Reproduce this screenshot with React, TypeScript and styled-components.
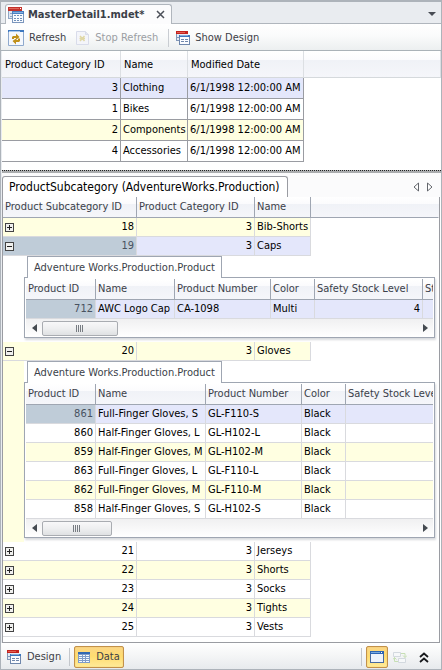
import React, { useState } from "react";
import styled, { createGlobalStyle, css } from "styled-components";

const GlobalStyle = createGlobalStyle`
  *, *::before, *::after { box-sizing: border-box; }
  body { margin: 0; }
  body, button {
    font-family: "DejaVu Sans Condensed", "Noto Sans", sans-serif;
    font-size: 11px;
    line-height: 14px;
  }
  button { padding: 0; border: 0; background: none; color: inherit; }
  svg { display: block; flex: none; }
`;

const line = "#9a9ca2";
const softLine = "#d9dade";
const steel = "#9fa6b2";
const yellow = "#ffffe1";
const lavender = "#e4e7fb";
const focused = "#bfccd8";

/* ---------- layout ---------- */

const Window = styled.main`
  display: flex;
  flex-direction: column;
  min-height: 100vh;
  border: 1px solid #adb3ba;
  border-top-width: 2px;
  background: #e9ecf0;
  color: #000;
`;

const DocumentStrip = styled.header`
  display: flex;
  align-items: flex-end;
  justify-content: space-between;
  height: 22px;
  padding: 0 1px 0 4px;
  border-bottom: 1px solid #b0b6bd;
`;

const DocumentTab = styled.div`
  display: flex;
  align-items: center;
  gap: 8px;
  height: 20px;
  margin-bottom: -1px;
  padding: 0 2px;
  border: 1px solid #b0b6bd;
  border-bottom: 0;
  border-radius: 3px 3px 0 0;
  background: #fcfcfd;
`;

const DocumentTitle = styled.button`
  display: flex;
  align-items: center;
  gap: 4px;
  font-weight: bold;
  color: #3b3f48;
`;

const IconButton = styled.button<{ $narrow?: boolean }>`
  display: flex;
  align-items: center;
  justify-content: center;
  width: ${(p) => (p.$narrow ? 14 : 16)}px;
  height: 18px;
`;

const Toolbar = styled.div`
  display: flex;
  align-items: center;
  height: 27px;
  padding: 1px 7px 0;
  border-bottom: 1px solid #aab2b8;
  background: linear-gradient(#ffffff, #fafbfb 45%, #eceff0);
`;

const ToolButton = styled.button`
  display: flex;
  align-items: center;
  gap: 5px;
  margin-right: 10px;
  color: #3d4047;
  &:disabled { color: #9b9ea3; }
`;

const Divider = styled.span`
  width: 1px;
  height: 18px;
  margin-right: 7px;
  background: #c9cdd2;
`;

const Content = styled.div`
  display: flex;
  flex: 1;
  flex-direction: column;
  margin-left: 1px;
  background: #fff;
`;

const Splitter = styled.div`
  height: 3px;
  margin-top: 8px;
  border-bottom: 2px solid #aaacae;
  background: repeating-linear-gradient(90deg, #222 0 1px, #b8babc 1px 2px) 0 0 / 100% 1px no-repeat;
`;

const DetailStrip = styled.div`
  display: flex;
  align-items: flex-end;
  justify-content: space-between;
  height: 24px;
  padding-right: 4px;
  background: #fbfbfc;
`;

const DetailTab = styled.button`
  height: 21px;
  padding: 0 7px 0 6px;
  border: 1px solid ${line};
  border-bottom: 0;
  border-radius: 3px 3px 0 0;
  background: #fff;
  font-size: 12px;
`;

const Pager = styled.div`
  display: flex;
  padding-bottom: 1px;
`;

const DetailPanel = styled.section`
  flex: 1;
  margin-right: 1px;
  padding-bottom: 5px;
  border: 1px solid ${line};
  border-top: 0;
`;

/* ---------- grids ---------- */

const Grid = styled.table`
  width: 100%;
  border-collapse: separate;
  border-spacing: 0;
  table-layout: fixed;
`;

const headerFill = "linear-gradient(#ffffff 0, #fbfbfd 35%, #f0f2f7 36%, #f5f6fa 100%)";

const HeadCell = styled.th<{ $variant?: "master" | "detail" }>`
  height: ${(p) => (p.$variant === "master" ? 27 : 21)}px;
  padding: ${(p) => (p.$variant === "master" ? "2px 0 0 3px" : "0 0 0 2px")};
  overflow: hidden;
  border-right: 1px solid ${(p) => (p.$variant === "master" ? "#dcdfe3" : steel)};
  border-bottom: 1px solid ${(p) => (p.$variant === "master" ? "#d5d9dc" : steel)};
  background: ${headerFill};
  color: ${(p) => (p.$variant === "master" ? "#000" : "#3b3f4a")};
  font-weight: normal;
  text-align: left;
  white-space: nowrap;
  &:last-child { border-right-color: ${(p) => (p.$variant === "master" ? "#dcdfe3" : "transparent")}; }
`;

type Tone = "plain" | "alt" | "selected";
const fill: Record<Tone, string> = { plain: "#fff", alt: yellow, selected: lavender };

const Cell = styled.td<{ $tone?: Tone; $master?: boolean; $numeric?: boolean; $focus?: boolean }>`
  height: ${(p) => (p.$master ? 21 : 19)}px;
  padding: 0 2px;
  overflow: hidden;
  border-right: 1px solid ${(p) => (p.$master ? line : softLine)};
  border-bottom: 1px solid ${(p) => (p.$master ? line : softLine)};
  background: ${(p) => (p.$focus ? focused : fill[p.$tone ?? "plain"])};
  text-align: ${(p) => (p.$numeric ? "right" : "left")};
  white-space: nowrap;
  ${(p) => p.$focus && css`color: #48525f;`}
`;

const Blank = styled.td`
  padding: 0;
`;

const ExpandLine = styled.div`
  display: flex;
  align-items: center;
  justify-content: space-between;
`;

const Expander = styled.button`
  display: flex;
  width: 9px;
  height: 9px;
`;

const NestedCell = styled.td<{ $tone: Tone }>`
  padding: 0 4px 4px 0;
  background: linear-gradient(90deg, ${(p) => fill[p.$tone]} 21px, #fff 21px);
`;

const NestedArea = styled.div`
  display: flex;
  flex-direction: column;
  align-items: flex-start;
  margin-left: 21px;
  background: #fff;
`;

const NestedTab = styled.button`
  position: relative;
  height: 22px;
  margin: 0 0 -1px 3px;
  padding: 0 6px;
  border: 1px solid ${steel};
  border-bottom: 0;
  background: #fff;
  color: #3b3f4a;
`;

const NestedBox = styled.div`
  width: 100%;
  padding: 1px 1px 0;
  border: 1px solid ${steel};
  box-shadow: 1px 2px 2px #d8dadd;
`;

const GridClip = styled.div`
  overflow: hidden;
`;

const ScrollTrack = styled.div`
  display: flex;
  align-items: center;
  height: 18px;
  background: linear-gradient(#f0f0f1, #fff);
`;

const ScrollThumb = styled.div<{ $size: number }>`
  display: flex;
  align-items: center;
  justify-content: center;
  width: ${(p) => p.$size}px;
  height: 15px;
  margin-right: auto;
  border: 1px solid #a9acb1;
  border-radius: 2px;
  background: linear-gradient(#f8f8f9, #eeeff0 50%, #dfe1e3);
`;

/* ---------- footer ---------- */

const Footer = styled.footer`
  display: flex;
  align-items: center;
  height: 26px;
  padding: 2px 5px 0 2px;
  background: linear-gradient(#ffffff, #f4f5f6 50%, #e7eaed);
`;

const ViewButton = styled.button<{ $active?: boolean }>`
  display: flex;
  align-items: center;
  justify-content: center;
  gap: 6px;
  min-width: ${(p) => (p.$active ? 22 : 24)}px;
  height: 22px;
  padding: 0 3px;
  border: 1px solid transparent;
  border-radius: 2px;
  color: #3d4047;
  ${(p) => p.$active && css`
    border-color: #c2914a;
    background: linear-gradient(#fbd687, #ffdc70 45%, #ffeb99);
    box-shadow: inset 0 0 1px #d8a850;
  `}
`;

const FooterDivider = styled.span`
  width: 1px;
  height: 18px;
  margin: 0 4px;
  background: #c3c7cc;
`;

const Spacer = styled.span`
  flex: 1;
`;

/* ---------- icons ---------- */

const FormIcon = () => (
  <svg width="16" height="16" viewBox="0 0 16 16" shapeRendering="crispEdges" aria-hidden="true">
    <path fill="#dfe7f2" d="M0 4h13v8H0z" />
    <path fill="#c3312b" d="M0 0h14v4H0z" />
    <path fill="#e0685c" d="M1 1h10v1H1z" />
    <path fill="#fff" d="M12 1h1v1h-1z" />
    <path fill="#8fa5c4" d="M0 4h1v8H0zM0 11h4v1H0zM2 6h2v1H2zM2 9h2v1H2z" />
    <path fill="#f9fbff" d="M4 5h12v11H4z" />
    <path fill="#4a7fc1" d="M4 4h12v3H4z" />
    <path fill="#86b1e2" d="M5 5h10v1H5z" />
    <path fill="#7c97bd" d="M4 7h1v9H4zM15 7h1v9h-1zM4 15h12v1H4z" />
    <path fill="#6f8fb9" d="M6 8h2v1H6zM9 8h2v1H9zM12 8h2v1h-2zM6 11h2v1H6zM9 11h2v1H9zM12 11h2v1h-2zM6 13h2v1H6zM9 13h2v1H9zM12 13h2v1h-2z" />
  </svg>
);

const DesignIcon = () => (
  <svg width="14" height="14" viewBox="0 0 14 14" shapeRendering="crispEdges" aria-hidden="true">
    <path fill="#e4eaf4" d="M0 3h12v7H0z" />
    <path fill="#c3221d" d="M0 0h12v3H0z" />
    <path fill="#e25e52" d="M1 1h8v1H1z" />
    <path fill="#8297b8" d="M0 3h1v7H0zM0 9h3v1H0zM1 6h2v1H1z" />
    <path fill="#fbfcff" d="M3 5h11v9H3z" />
    <path fill="#3c76bd" d="M3 4h11v2H3z" />
    <path fill="#86aedb" d="M4 4h8v1H4z" />
    <path fill="#6f87ac" d="M3 6h1v8H3zM13 6h1v8h-1zM3 13h11v1H3zM5 8h3v1H5zM9 8h3v1H9zM5 10h3v1H5zM9 10h3v1H9z" />
  </svg>
);

const RefreshIcon = () => (
  <svg width="16" height="16" viewBox="0 0 16 16" aria-hidden="true">
    <path fill="#f5f8fd" stroke="#8fa9cd" d="M.5 1.5h15v14H.5z" />
    <path fill="#3d78c0" d="M0 0h16v2H0z" />
    <path fill="#a9c8ec" d="M1 1h11v1H1z" />
    <path fill="#c0901a" d="M4 9V7l1-1h3V3.500L11.500 7 8 10V8H6v1zM12 8.500V11l-1 1H8v2.500L4.500 11 8 8.500V10h2V8.500z" />
  </svg>
);

const StopIcon = () => (
  <svg width="14" height="16" viewBox="0 0 14 16" aria-hidden="true">
    <path fill="#f4f5fa" stroke="#d9dcea" d="M.5 1.500h9l3 3v10H.5z" />
    <path fill="#e4e7f2" stroke="#d9dcea" d="M9.500 1.500v3h3" />
    <path fill="none" stroke="#e0d8a6" strokeWidth="1.500" d="M4 6l4.500 5M8.500 6L4 11M3.500 8.500H9" />
  </svg>
);

const CloseIcon = () => (
  <svg width="9" height="9" viewBox="0 0 9 9" aria-hidden="true">
    <path stroke="#4c5059" strokeWidth="1.500" d="M1 1l7 7M8 1L1 8" />
  </svg>
);

const MenuArrow = () => (
  <svg width="8" height="4" viewBox="0 0 8 4" aria-hidden="true">
    <path fill="#484c54" d="M0 0h8L4 4z" />
  </svg>
);

const OutlineArrow = ({ dir }: { dir: "left" | "right" }) => (
  <svg width="6" height="10" viewBox="0 0 6 10" aria-hidden="true">
    <path fill="#fff" stroke="#63666c" d={dir === "left" ? "M5.500 1v8L1 5z" : "M.5 1v8L5 5z"} />
  </svg>
);

const ScrollArrow = ({ dir }: { dir: "left" | "right" }) => (
  <svg width="5" height="8" viewBox="0 0 5 8" aria-hidden="true">
    <path fill="#444a50" d={dir === "left" ? "M5 0v8L0 4z" : "M0 0v8l5-4z"} />
  </svg>
);

const Grip = () => (
  <svg width="8" height="7" viewBox="0 0 8 7" shapeRendering="crispEdges" aria-hidden="true">
    <path fill="#777c82" d="M0 0h1v7H0zM2 0h1v7H2zM4 0h1v7H4zM6 0h1v7H6z" />
  </svg>
);

const SignIcon = ({ open }: { open: boolean }) => (
  <svg width="9" height="9" viewBox="0 0 9 9" shapeRendering="crispEdges" aria-hidden="true">
    <path fill="#444" d="M0 0h9v9H0z" />
    <path fill="#f0f0ee" d="M1 1h7v7H1z" />
    <path fill="#222" d={open ? "M2 4h5v1H2z" : "M2 4h5v1H2zM4 2h1v5H4z"} />
  </svg>
);

const TableIcon = () => (
  <svg width="12" height="11" viewBox="0 0 12 11" shapeRendering="crispEdges" aria-hidden="true">
    <path fill="#7f9cc8" d="M0 0h12v11H0z" />
    <path fill="#3168b3" d="M0 0h12v2H0z" />
    <path fill="#f6faff" d="M1 3h3v1H1zM5 3h2v1H5zM8 3h3v1H8zM1 5h3v1H1zM5 5h2v1H5zM8 5h3v1H8zM1 7h3v1H1zM5 7h2v1H5zM8 7h3v1H8zM1 9h3v1H1zM5 9h2v1H5zM8 9h3v1H8z" />
  </svg>
);

const PaneIcon = () => (
  <svg width="14" height="12" viewBox="0 0 14 12" shapeRendering="crispEdges" aria-hidden="true">
    <path fill="#47699f" d="M0 0h14v12H0z" />
    <path fill="#2c65b5" d="M0 0h14v3H0z" />
    <path fill="#79a9df" d="M1 1h9v1H1z" />
    <path fill="#fff" d="M11 1h1v1h-1z" />
    <path fill="#edf3fc" d="M1 3h12v8H1z" />
  </svg>
);

const LinkIcon = () => (
  <svg width="14" height="13" viewBox="0 0 14 13" aria-hidden="true">
    <path fill="#f6f8f9" stroke="#d3d9df" d="M.5 1.500h7v4h-7zM5.500 7.500h7v4h-7z" />
    <path fill="none" stroke="#c6dfb4" d="M8 2.500h4v4M10 4.500l2 2 2-2M5 10.500H1.500v-4M0 8.500l1.500-2 2 2" />
  </svg>
);

const ChevronsUp = () => (
  <svg width="10" height="11" viewBox="0 0 10 11" aria-hidden="true">
    <path fill="none" stroke="#18191c" strokeWidth="1.800" d="M1 5l4-3.500L9 5M1 10l4-3.500L9 10" />
  </svg>
);

/* ---------- data ---------- */

const categories: { id: number; name: string; tone: Tone }[] = [
  { id: 3, name: "Clothing", tone: "selected" },
  { id: 1, name: "Bikes", tone: "plain" },
  { id: 2, name: "Components", tone: "alt" },
  { id: 4, name: "Accessories", tone: "plain" },
];

type Product = { id: number; name: string; number: string; color: string; stock?: number };
type ProductSet = { nameWidth: number; thumb: number; items: Product[] };

const caps: ProductSet = {
  nameWidth: 79,
  thumb: 76,
  items: [{ id: 712, name: "AWC Logo Cap", number: "CA-1098", color: "Multi", stock: 4 }],
};

const gloves: ProductSet = {
  nameWidth: 110,
  thumb: 70,
  items: [
    { id: 861, name: "Full-Finger Gloves, S", number: "GL-F110-S", color: "Black" },
    { id: 860, name: "Half-Finger Gloves, L", number: "GL-H102-L", color: "Black" },
    { id: 859, name: "Half-Finger Gloves, M", number: "GL-H102-M", color: "Black" },
    { id: 863, name: "Full-Finger Gloves, L", number: "GL-F110-L", color: "Black" },
    { id: 862, name: "Full-Finger Gloves, M", number: "GL-F110-M", color: "Black" },
    { id: 858, name: "Half-Finger Gloves, S", number: "GL-H102-S", color: "Black" },
  ],
};

const subcategories: { id: number; name: string; tone: Tone; products?: ProductSet }[] = [
  { id: 18, name: "Bib-Shorts", tone: "alt" },
  { id: 19, name: "Caps", tone: "selected", products: caps },
  { id: 20, name: "Gloves", tone: "alt", products: gloves },
  { id: 21, name: "Jerseys", tone: "plain" },
  { id: 22, name: "Shorts", tone: "alt" },
  { id: 23, name: "Socks", tone: "plain" },
  { id: 24, name: "Tights", tone: "alt" },
  { id: 25, name: "Vests", tone: "plain" },
];

/* ---------- parts ---------- */

function ProductGrid({ set }: { set: ProductSet }) {
  return (
    <NestedArea>
      <NestedTab type="button">Adventure Works.Production.Product</NestedTab>
      <NestedBox>
        <GridClip>
          <Grid>
            <colgroup>
              <col width={70} />
              <col width={set.nameWidth} />
              <col width={96} />
              <col width={44} />
              <col width={108} />
              <col width={90} />
            </colgroup>
            <thead>
              <tr>
                {["Product ID", "Name", "Product Number", "Color", "Safety Stock Level", "Standard Cost"].map((h) => (
                  <HeadCell key={h} scope="col">{h}</HeadCell>
                ))}
              </tr>
            </thead>
            <tbody>
              {set.items.map((p, i) => {
                const tone: Tone = i === 0 ? "selected" : i % 2 === 0 ? "alt" : "plain";
                return (
                  <tr key={p.id}>
                    <Cell $tone={tone} $numeric $focus={i === 0}>{p.id}</Cell>
                    <Cell $tone={tone}>{p.name}</Cell>
                    <Cell $tone={tone}>{p.number}</Cell>
                    <Cell $tone={tone}>{p.color}</Cell>
                    <Cell $tone={tone} $numeric>{p.stock}</Cell>
                    <Cell $tone={tone} />
                  </tr>
                );
              })}
            </tbody>
          </Grid>
        </GridClip>
        <ScrollTrack>
          <IconButton type="button" aria-label="Scroll left"><ScrollArrow dir="left" /></IconButton>
          <ScrollThumb $size={set.thumb}><Grip /></ScrollThumb>
          <IconButton type="button" aria-label="Scroll right"><ScrollArrow dir="right" /></IconButton>
        </ScrollTrack>
      </NestedBox>
    </NestedArea>
  );
}

function MasterGrid() {
  return (
    <Grid>
      <colgroup>
        <col width={119} />
        <col width={67} />
        <col width={116} />
        <col />
      </colgroup>
      <thead>
        <tr>
          {["Product Category ID", "Name", "Modified Date", ""].map((h) => (
            <HeadCell key={h} $variant="master" scope="col">{h}</HeadCell>
          ))}
        </tr>
      </thead>
      <tbody>
        {categories.map((c) => (
          <tr key={c.id}>
            <Cell $master $tone={c.tone} $numeric>{c.id}</Cell>
            <Cell $master $tone={c.tone}>{c.name}</Cell>
            <Cell $master $tone={c.tone}>6/1/1998 12:00:00 AM</Cell>
            <Blank />
          </tr>
        ))}
      </tbody>
    </Grid>
  );
}

function SubcategoryGrid() {
  const [open, setOpen] = useState<number[]>([19, 20]);
  const toggle = (id: number) =>
    setOpen((ids) => (ids.includes(id) ? ids.filter((x) => x !== id) : [...ids, id]));

  return (
    <Grid>
      <colgroup>
        <col width={134} />
        <col width={118} />
        <col width={56} />
        <col />
      </colgroup>
      <thead>
        <tr>
          {["Product Subcategory ID", "Product Category ID", "Name", ""].map((h) => (
            <HeadCell key={h} $variant="detail" scope="col">{h}</HeadCell>
          ))}
        </tr>
      </thead>
      <tbody>
        {subcategories.map((s) => {
          const isOpen = open.includes(s.id);
          return (
            <React.Fragment key={s.id}>
              <tr>
                <Cell $tone={s.tone} $focus={s.id === 19}>
                  <ExpandLine>
                    <Expander
                      type="button"
                      aria-expanded={isOpen}
                      aria-label={`Products of ${s.name}`}
                      onClick={() => toggle(s.id)}
                    >
                      <SignIcon open={isOpen} />
                    </Expander>
                    <span>{s.id}</span>
                  </ExpandLine>
                </Cell>
                <Cell $tone={s.tone} $numeric>3</Cell>
                <Cell $tone={s.tone}>{s.name}</Cell>
                <Blank />
              </tr>
              {isOpen && s.products && (
                <tr>
                  <NestedCell colSpan={4} $tone={s.tone === "alt" ? "alt" : "plain"}>
                    <ProductGrid set={s.products} />
                  </NestedCell>
                </tr>
              )}
            </React.Fragment>
          );
        })}
      </tbody>
    </Grid>
  );
}

export default function App() {
  return (
    <>
      <GlobalStyle />
      <Window>
        <DocumentStrip>
          <DocumentTab>
            <DocumentTitle type="button"><FormIcon />MasterDetail1.mdet*</DocumentTitle>
            <IconButton type="button" aria-label="Close"><CloseIcon /></IconButton>
          </DocumentTab>
          <IconButton type="button" aria-label="Open documents"><MenuArrow /></IconButton>
        </DocumentStrip>
        <Toolbar role="toolbar">
          <ToolButton type="button"><RefreshIcon />Refresh</ToolButton>
          <ToolButton type="button" disabled><StopIcon />Stop Refresh</ToolButton>
          <Divider />
          <ToolButton type="button"><DesignIcon />Show Design</ToolButton>
        </Toolbar>
        <Content>
          <MasterGrid />
          <Splitter role="separator" />
          <DetailStrip>
            <DetailTab type="button">ProductSubcategory (AdventureWorks.Production)</DetailTab>
            <Pager>
              <IconButton $narrow type="button" aria-label="Previous tab"><OutlineArrow dir="left" /></IconButton>
              <IconButton $narrow type="button" aria-label="Next tab"><OutlineArrow dir="right" /></IconButton>
            </Pager>
          </DetailStrip>
          <DetailPanel>
            <SubcategoryGrid />
          </DetailPanel>
        </Content>
        <Footer>
          <ViewButton type="button"><DesignIcon />Design</ViewButton>
          <FooterDivider />
          <ViewButton type="button" $active aria-pressed="true"><TableIcon />Data</ViewButton>
          <Spacer />
          <FooterDivider />
          <ViewButton type="button" $active aria-label="Single pane"><PaneIcon /></ViewButton>
          <ViewButton type="button" disabled aria-label="Swap panes"><LinkIcon /></ViewButton>
          <ViewButton type="button" aria-label="Collapse"><ChevronsUp /></ViewButton>
        </Footer>
      </Window>
    </>
  );
}
